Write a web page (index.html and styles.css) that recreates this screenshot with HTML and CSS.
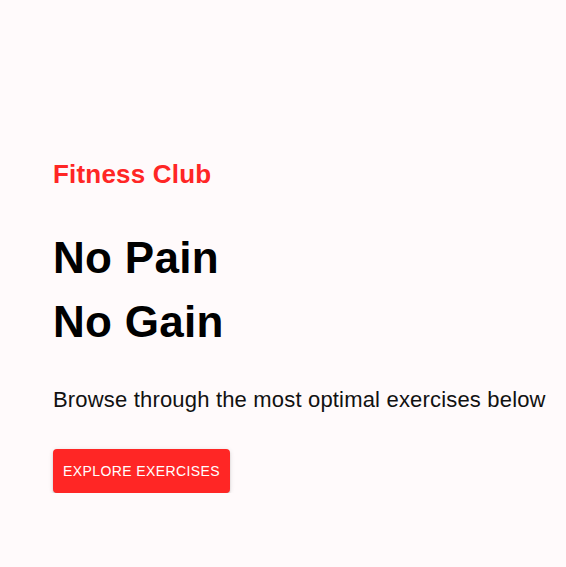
FILE: index.html
```html
<!DOCTYPE html>
<html>
<head>
<meta charset="utf-8">
<link rel="stylesheet" href="styles.css">
</head>
<body>
<section class="hero">
  <p class="club">Fitness Club</p>
  <h1 class="title">No Pain<br>No Gain</h1>
  <p class="lead">Browse through the most optimal exercises below</p>
  <a class="btn" href="#exercises">EXPLORE EXERCISES</a>
</section>
</body>
</html>
```
FILE: styles.css
```css
html, body {
  margin: 0;
  padding: 0;
  background: #fffafb;
}
body {
  font-family: "Liberation Sans", Arial, sans-serif;
  color: #000;
}
.hero {
  padding: 158px 0 0 53px;
  display: flex;
  flex-direction: column;
  align-items: flex-start;
}
.club {
  margin: 0;
  color: #ff2625;
  font-weight: 700;
  font-size: 26px;
  line-height: 32px;
  letter-spacing: 0.2px;
}
.title {
  margin: 36px 0 0;
  font-weight: 700;
  font-size: 44px;
  line-height: 64px;
  letter-spacing: 0.3px;
}
.lead {
  margin: 31px 0 0;
  font-size: 22px;
  line-height: 30px;
  letter-spacing: 0.18px;
  color: #111;
}
.btn {
  margin-top: 34px;
  display: inline-block;
  background: #ff2625;
  color: #fff;
  text-decoration: none;
  font-size: 14px;
  line-height: 24px;
  letter-spacing: 0.4px;
  padding: 10px;
  border-radius: 4px;
  box-shadow: 0 3px 1px -2px rgba(0,0,0,0.2), 0 2px 2px 0 rgba(0,0,0,0.14), 0 1px 5px 0 rgba(0,0,0,0.12);
}
```
